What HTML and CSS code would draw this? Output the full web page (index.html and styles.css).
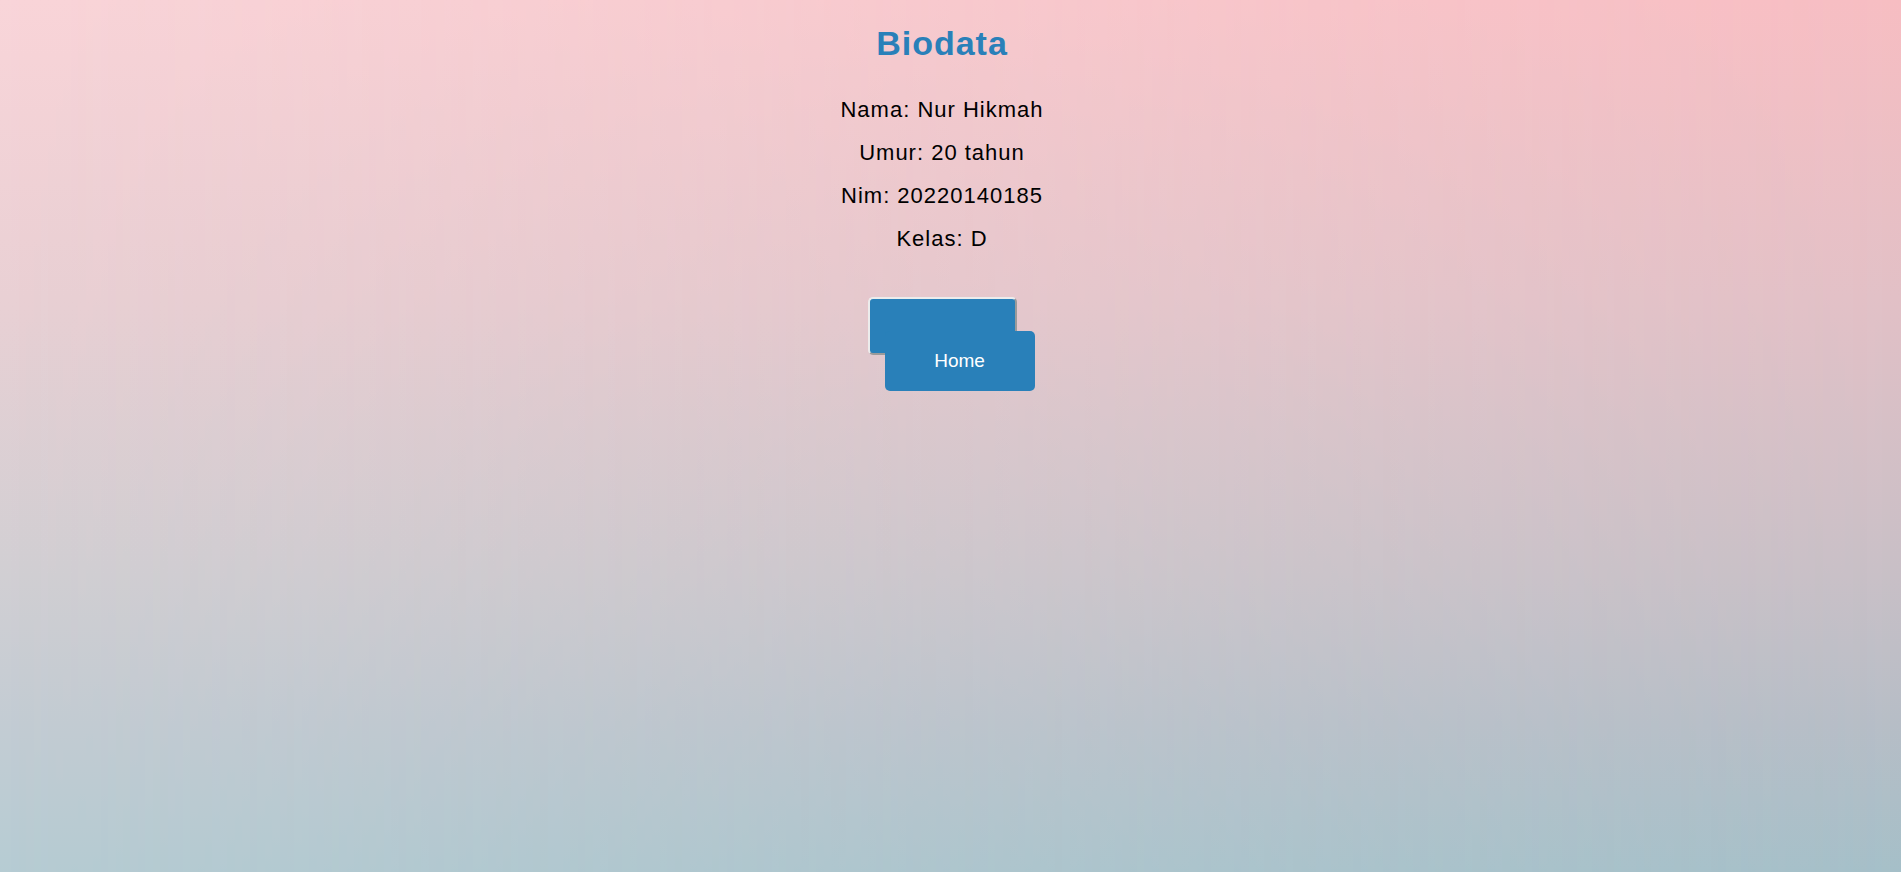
FILE: index.html
```html
<!DOCTYPE html>
<html lang="id">
<head>
<meta charset="utf-8">
<title>Biodata</title>
<link rel="stylesheet" href="styles.css">
</head>
<body>
<main class="page">
  <h1 class="title">Biodata</h1>
  <section class="info">
    <p>Nama: Nur Hikmah</p>
    <p>Umur: 20 tahun</p>
    <p>Nim: 20220140185</p>
    <p>Kelas: D</p>
  </section>
  <button class="home-btn" type="button"><a class="home-link" href="#">Home</a></button>
</main>
</body>
</html>
```

FILE: styles.css
```css
html, body {
  margin: 0;
  padding: 0;
  height: 100%;
}

body {
  font-family: "Liberation Sans", Arial, sans-serif;
  color: #000;
  background: linear-gradient(to bottom, #f9d5d9 0%, #e9d0d4 34%, #d1cfd3 66%, #c3ccd3 83%, #b6ccd3 100%);
}

.page {
  position: relative;
  min-height: 100vh;
  box-sizing: border-box;
  padding-right: 17px;
  display: flex;
  flex-direction: column;
  align-items: center;
}

.page::before {
  content: "";
  position: absolute;
  inset: 0;
  z-index: 0;
  background: linear-gradient(to bottom, #f7bdc2 0%, #e2c0c6 34%, #c8bfc6 66%, #b6bdc6 83%, #a5bfc8 100%);
  -webkit-mask-image: linear-gradient(to right, transparent 0%, #000 100%);
  mask-image: linear-gradient(to right, transparent 0%, #000 100%);
  pointer-events: none;
}

.title, .info, .home-btn {
  position: relative;
  z-index: 1;
}

.title {
  margin: 23px 0 0;
  font-size: 34px;
  line-height: 40px;
  font-weight: bold;
  letter-spacing: 1px;
  color: #2980b9;
}

.info {
  margin-top: 25px;
  display: flex;
  flex-direction: column;
  align-items: center;
}

.info p {
  margin: 0;
  font-size: 22px;
  line-height: 43px;
  letter-spacing: 1px;
}

.home-btn {
  margin-top: 37px;
  width: 149px;
  height: 58px;
  box-sizing: border-box;
  padding: 0;
  background: #2980b9;
  border: 2px solid;
  border-color: #ececec #9a9a9a #9a9a9a #ececec;
  border-radius: 5px;
}

.home-link {
  position: absolute;
  left: 15px;
  top: 32px;
  width: 150px;
  height: 60px;
  display: flex;
  align-items: center;
  justify-content: center;
  background: #2980b9;
  border-radius: 5px;
  color: #fff;
  text-decoration: none;
  font-family: "Liberation Sans", Arial, sans-serif;
  font-size: 19px;
}
```
